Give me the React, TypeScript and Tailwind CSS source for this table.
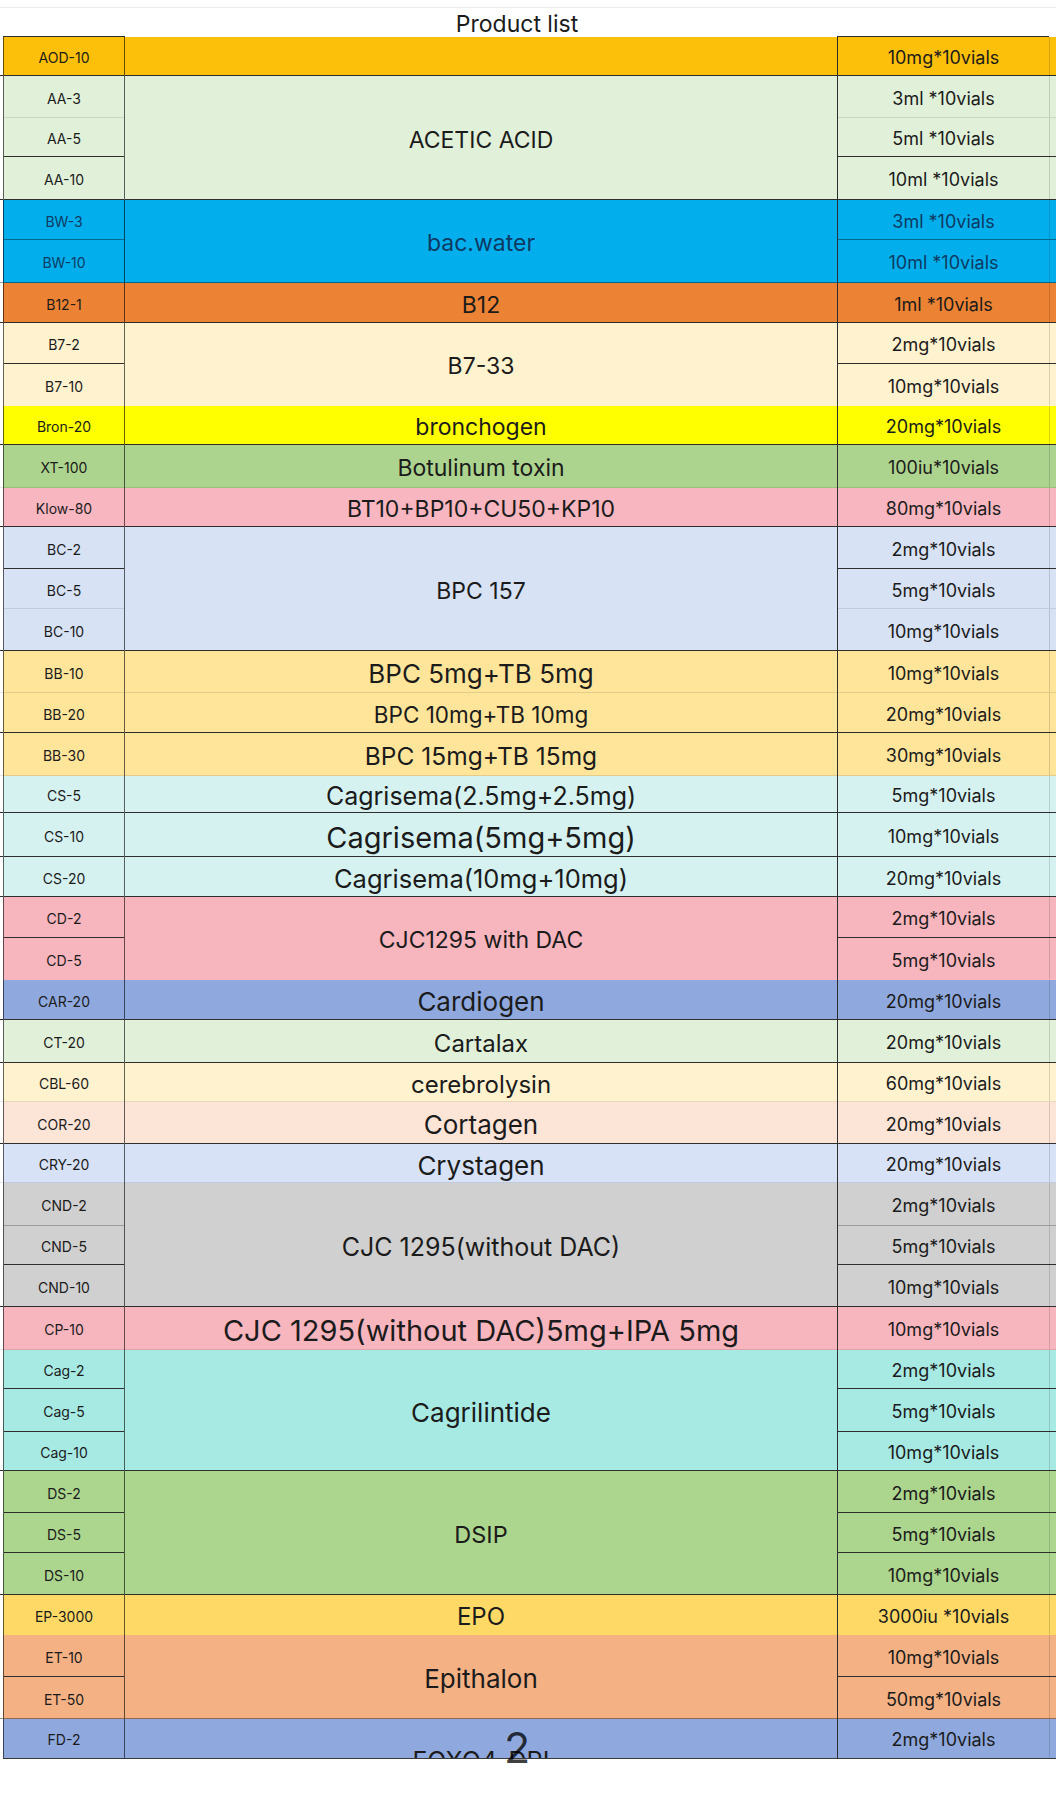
import React from 'react';

// line classes for cell bottoms
const DARK = 'border-b-[#2e2e2e]';
const MID = 'border-b-black/40';
const SOFT = 'border-b-black/25';
const FAINT = 'border-b-black/10';
const NONE = 'border-b-transparent';

type Item = { code: string; spec: string; h: string; line: string };
type Group = {
  name: string;
  size: string;
  bg: string;
  line: string;
  ink?: string;
  items: Item[];
};

const groups: Group[] = [
  { name: '', size: 'text-[23px]', bg: 'bg-[#FDC00A]', line: DARK, items: [{ code: 'AOD-10', spec: '10mg*10vials', h: 'h-[39px]', line: DARK }] },
  {
    name: 'ACETIC ACID', size: 'text-[23px]', bg: 'bg-[#E1F0D9]', line: DARK,
    items: [
      { code: 'AA-3', spec: '3ml *10vials', h: 'h-[42px]', line: FAINT },
      { code: 'AA-5', spec: '5ml *10vials', h: 'h-[39px]', line: DARK },
      { code: 'AA-10', spec: '10ml *10vials', h: 'h-[43px]', line: DARK },
    ],
  },
  {
    name: 'bac.water', size: 'text-[23px]', bg: 'bg-[#02AFEC]', line: MID, ink: 'text-[#0e3a63]',
    items: [
      { code: 'BW-3', spec: '3ml *10vials', h: 'h-[40px]', line: MID },
      { code: 'BW-10', spec: '10ml *10vials', h: 'h-[43px]', line: MID },
    ],
  },
  { name: 'B12', size: 'text-[23px]', bg: 'bg-[#EC8334]', line: DARK, items: [{ code: 'B12-1', spec: '1ml *10vials', h: 'h-[40px]', line: DARK }] },
  {
    name: 'B7-33', size: 'text-[23px]', bg: 'bg-[#FFF2CF]', line: NONE,
    items: [
      { code: 'B7-2', spec: '2mg*10vials', h: 'h-[41px]', line: DARK },
      { code: 'B7-10', spec: '10mg*10vials', h: 'h-[42px]', line: NONE },
    ],
  },
  { name: 'bronchogen', size: 'text-[23px]', bg: 'bg-[#FFFF00]', line: DARK, items: [{ code: 'Bron-20', spec: '20mg*10vials', h: 'h-[39px]', line: DARK }] },
  { name: 'Botulinum toxin', size: 'text-[23px]', bg: 'bg-[#ADD48E]', line: FAINT, items: [{ code: 'XT-100', spec: '100iu*10vials', h: 'h-[43px]', line: FAINT }] },
  { name: 'BT10+BP10+CU50+KP10', size: 'text-[23px]', bg: 'bg-[#F7B6C0]', line: DARK, items: [{ code: 'Klow-80', spec: '80mg*10vials', h: 'h-[39px]', line: DARK }] },
  {
    name: 'BPC 157', size: 'text-[23px]', bg: 'bg-[#D7E2F5]', line: DARK,
    items: [
      { code: 'BC-2', spec: '2mg*10vials', h: 'h-[42px]', line: DARK },
      { code: 'BC-5', spec: '5mg*10vials', h: 'h-[40px]', line: FAINT },
      { code: 'BC-10', spec: '10mg*10vials', h: 'h-[42px]', line: DARK },
    ],
  },
  { name: 'BPC 5mg+TB 5mg', size: 'text-[26px]', bg: 'bg-[#FEE59A]', line: FAINT, items: [{ code: 'BB-10', spec: '10mg*10vials', h: 'h-[42px]', line: FAINT }] },
  { name: 'BPC 10mg+TB 10mg', size: 'text-[22.5px]', bg: 'bg-[#FEE59A]', line: DARK, items: [{ code: 'BB-20', spec: '20mg*10vials', h: 'h-[40px]', line: DARK }] },
  { name: 'BPC 15mg+TB 15mg', size: 'text-[24.5px]', bg: 'bg-[#FEE59A]', line: FAINT, items: [{ code: 'BB-30', spec: '30mg*10vials', h: 'h-[43px]', line: FAINT }] },
  { name: 'Cagrisema(2.5mg+2.5mg)', size: 'text-[25px]', bg: 'bg-[#D6F2F0]', line: DARK, items: [{ code: 'CS-5', spec: '5mg*10vials', h: 'h-[37px]', line: DARK }] },
  { name: 'Cagrisema(5mg+5mg)', size: 'text-[29px]', bg: 'bg-[#D6F2F0]', line: DARK, items: [{ code: 'CS-10', spec: '10mg*10vials', h: 'h-[44px]', line: DARK }] },
  { name: 'Cagrisema(10mg+10mg)', size: 'text-[25.5px]', bg: 'bg-[#D6F2F0]', line: DARK, items: [{ code: 'CS-20', spec: '20mg*10vials', h: 'h-[40px]', line: DARK }] },
  {
    name: 'CJC1295 with DAC', size: 'text-[23px]', bg: 'bg-[#F7B5BE]', line: NONE,
    items: [
      { code: 'CD-2', spec: '2mg*10vials', h: 'h-[41px]', line: DARK },
      { code: 'CD-5', spec: '5mg*10vials', h: 'h-[42px]', line: NONE },
    ],
  },
  { name: 'Cardiogen', size: 'text-[26px]', bg: 'bg-[#8FA9DE]', line: DARK, items: [{ code: 'CAR-20', spec: '20mg*10vials', h: 'h-[40px]', line: DARK }] },
  { name: 'Cartalax', size: 'text-[24px]', bg: 'bg-[#E1F0D9]', line: DARK, items: [{ code: 'CT-20', spec: '20mg*10vials', h: 'h-[43px]', line: DARK }] },
  { name: 'cerebrolysin', size: 'text-[24px]', bg: 'bg-[#FFF2CF]', line: FAINT, items: [{ code: 'CBL-60', spec: '60mg*10vials', h: 'h-[39px]', line: FAINT }] },
  { name: 'Cortagen', size: 'text-[26px]', bg: 'bg-[#FCE4D7]', line: DARK, items: [{ code: 'COR-20', spec: '20mg*10vials', h: 'h-[42px]', line: DARK }] },
  { name: 'Crystagen', size: 'text-[26px]', bg: 'bg-[#D7E2F7]', line: FAINT, items: [{ code: 'CRY-20', spec: '20mg*10vials', h: 'h-[39px]', line: FAINT }] },
  {
    name: 'CJC 1295(without DAC)', size: 'text-[25px]', bg: 'bg-[#D0D0D0]', line: DARK,
    items: [
      { code: 'CND-2', spec: '2mg*10vials', h: 'h-[43px]', line: SOFT },
      { code: 'CND-5', spec: '5mg*10vials', h: 'h-[39px]', line: DARK },
      { code: 'CND-10', spec: '10mg*10vials', h: 'h-[42px]', line: DARK },
    ],
  },
  { name: 'CJC 1295(without DAC)5mg+IPA 5mg', size: 'text-[29px]', bg: 'bg-[#F7B5BE]', line: FAINT, items: [{ code: 'CP-10', spec: '10mg*10vials', h: 'h-[43px]', line: FAINT }] },
  {
    name: 'Cagrilintide', size: 'text-[26px]', bg: 'bg-[#A7EAE4]', line: DARK,
    items: [
      { code: 'Cag-2', spec: '2mg*10vials', h: 'h-[39px]', line: DARK },
      { code: 'Cag-5', spec: '5mg*10vials', h: 'h-[43px]', line: DARK },
      { code: 'Cag-10', spec: '10mg*10vials', h: 'h-[39px]', line: DARK },
    ],
  },
  {
    name: 'DSIP', size: 'text-[23.5px]', bg: 'bg-[#ACD58D]', line: DARK,
    items: [
      { code: 'DS-2', spec: '2mg*10vials', h: 'h-[42px]', line: DARK },
      { code: 'DS-5', spec: '5mg*10vials', h: 'h-[40px]', line: DARK },
      { code: 'DS-10', spec: '10mg*10vials', h: 'h-[42px]', line: DARK },
    ],
  },
  { name: 'EPO', size: 'text-[24px]', bg: 'bg-[#FED966]', line: NONE, items: [{ code: 'EP-3000', spec: '3000iu *10vials', h: 'h-[40px]', line: NONE }] },
  {
    name: 'Epithalon', size: 'text-[26px]', bg: 'bg-[#F4B184]', line: MID,
    items: [
      { code: 'ET-10', spec: '10mg*10vials', h: 'h-[42px]', line: DARK },
      { code: 'ET-50', spec: '50mg*10vials', h: 'h-[42px]', line: MID },
    ],
  },
  {
    name: 'FOXO4-DRI', size: 'text-[25px]', bg: 'bg-[#8FA9DE]', line: NONE,
    items: [
      { code: 'FD-2', spec: '2mg*10vials', h: 'h-[39px]', line: NONE },
      { code: 'FD-10', spec: '10mg*10vials', h: 'h-[41px]', line: NONE },
    ],
  },
];

const GroupRow = ({ g }: { g: Group }) => {
  const ink = g.ink ?? 'text-[#1b1b1b]';
  return (
    <div className={`flex ${g.bg} ${ink}`}>
      <div className={`w-[3px] shrink-0 border-b bg-white ${g.line}`} />
      <div className="flex w-[122px] shrink-0 flex-col border-x border-x-black/60">
        {g.items.map((it) => (
          <div key={it.code} className={`flex ${it.h} items-center justify-center border-b pt-[4px] ${it.line} text-[14px] leading-none`}>
            {it.code}
          </div>
        ))}
      </div>
      <div className={`flex w-[712px] shrink-0 items-center justify-center border-b pt-[5px] ${g.line} ${g.size} leading-none`}>
        {g.name}
      </div>
      <div className="flex w-[219px] shrink-0 flex-col border-l border-l-[#2e2e2e]">
        {g.items.map((it) => (
          <div key={it.code} className={`flex ${it.h} border-b ${it.line}`}>
            <div className="flex w-[211px] items-center justify-center pt-[4px] text-[18px] leading-none">{it.spec}</div>
            <div className="w-[7px] border-l border-l-black/15" />
          </div>
        ))}
      </div>
    </div>
  );
};

export default function App() {
  return (
    <div className="relative h-[1804px] w-[1056px] overflow-hidden bg-white font-[Inter,'Noto_Sans',sans-serif]">
      {/* title */}
      <div className="h-[7px]" />
      <div className="h-px bg-[#ececec]" />
      <div className="flex h-[28px] items-center justify-center pr-[22px] pt-[4px] text-[23px] leading-none text-[#1b1b1b]">
        Product list
      </div>

      {/* table top edge */}
      <div className="flex h-px">
        <div className="w-[3px]" />
        <div className="w-[122px] bg-[#2e2e2e]" />
        <div className="w-[712px]" />
        <div className="w-[212px] bg-[#2e2e2e]" />
      </div>

      <div className="h-[1721px] overflow-hidden">
        {groups.map((g) => (
          <GroupRow key={g.items[0].code} g={g} />
        ))}
      </div>
      <div className="ml-[3px] h-px bg-[#3a3a3a]" />

      {/* page number stamp */}
      <div className="absolute left-[504px] top-[1726px] text-[43px] leading-none text-black/75">2</div>
    </div>
  );
}
